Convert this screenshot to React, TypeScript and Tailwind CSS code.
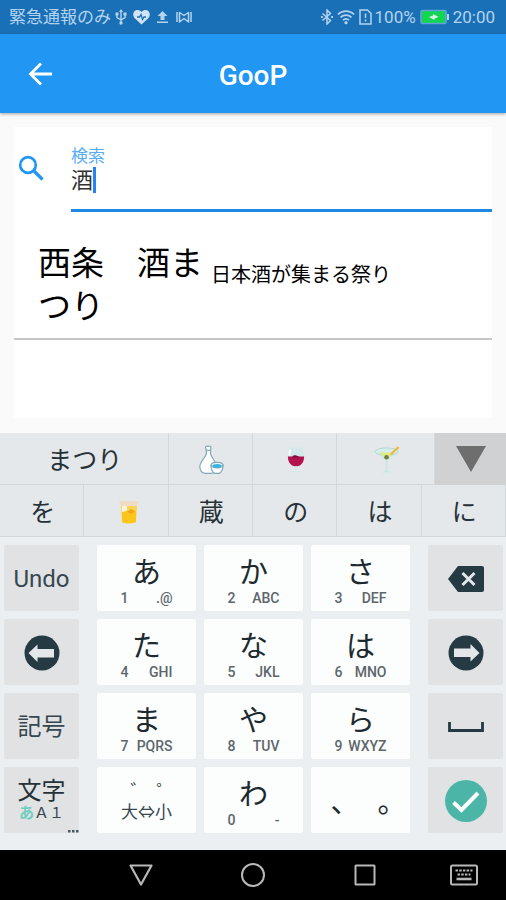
import type { ReactNode } from 'react';

const letterKeys = [
    { kana: 'あ', digit: '1', letters: '.@' },
    { kana: 'か', digit: '2', letters: 'ABC' },
    { kana: 'さ', digit: '3', letters: 'DEF' },
    { kana: 'た', digit: '4', letters: 'GHI' },
    { kana: 'な', digit: '5', letters: 'JKL' },
    { kana: 'は', digit: '6', letters: 'MNO' },
    { kana: 'ま', digit: '7', letters: 'PQRS' },
    { kana: 'や', digit: '8', letters: 'TUV' },
    { kana: 'ら', digit: '9', letters: 'WXYZ' },
];

function StatusBar() {
    return (
        <div className="flex h-[34px] items-center justify-between bg-[#1a70b7] pl-[9px] pr-[11px] text-[17px] leading-none text-[#b4d3ee]">
            <div className="flex items-center">
                <span>緊急通報のみ</span>
                {/* USB */}
                <svg className="ml-1 h-4 w-3" viewBox="0 0 12 16" fill="none" stroke="currentColor" strokeWidth="1.4">
                    <path d="M6 2v12M2 5v3.5l4 2.5 4-2.5V5" />
                    <path d="M6 0l2 3H4z" fill="currentColor" stroke="none" />
                    <circle cx="6" cy="14" r="1.7" fill="currentColor" stroke="none" />
                    <path d="M.5 3.5h3v3h-3zM8.5 3.5h3v3h-3z" fill="currentColor" stroke="none" />
                </svg>
                {/* Health */}
                <svg className="ml-1.5 h-4 w-[17px]" viewBox="0 0 17 16" fill="none">
                    <path d="M8.500 15.500L1.500 9C-2.500 4 3.500-2 8.500 3 13.500-2 19.500 4 15.500 9z" fill="#cfe3f5" />
                    <path d="M4 8h2.500L8 5.500l1.500 5L11 8h2" stroke="#1a70b7" strokeWidth="1.300" />
                </svg>
                {/* Upload */}
                <svg className="ml-[7px] h-3.5 w-[11px]" viewBox="0 0 11 14" fill="currentColor">
                    <path d="M5.500 1L10.500 6H7.500v4h-4V6H.5zM0 11.500h11V13H0z" />
                </svg>
                {/* Tuner */}
                <svg className="ml-2 h-3.5 w-4" viewBox="0 0 16 14" fill="none" stroke="currentColor" strokeWidth="1.500">
                    <path d="M1 2v10M15 2v10M3.500 12V2.500L8 5.500l4.500-3V12L8 8.500z" strokeLinejoin="round" />
                </svg>
            </div>
            <div className="flex items-center">
                {/* Bluetooth */}
                <svg className="h-4 w-3" viewBox="0 0 12 16" fill="none" stroke="currentColor" strokeWidth="1.500">
                    <path d="M1.500 4.500l8 7L6 15V1l3.500 3.500-8 7" />
                    <path d="M0 7h1.800v2H0zM10.200 7H12v2h-1.800z" fill="currentColor" stroke="none" />
                </svg>
                {/* Wi-Fi */}
                <svg className="ml-1 h-4 w-[18px]" viewBox="0 0 18 16" fill="none" stroke="currentColor" strokeWidth="1.700">
                    <path d="M.8 5.500c4.800-4.600 11.600-4.600 16.400 0M3.500 8.400c3.200-3 7.800-3 11 0M6 11.200c1.800-1.700 4.200-1.700 6 0" />
                    <circle cx="9" cy="13.700" r="1.600" fill="currentColor" stroke="none" />
                </svg>
                {/* SIM */}
                <svg className="ml-1 h-4 w-[13px]" viewBox="0 0 13 16" fill="none" stroke="currentColor" strokeWidth="1.500">
                    <path d="M1 1h7.500L12 4.500V15H1zM6.500 4.500V9M6.500 10.500v2" />
                </svg>
                <span className="ml-[3px]">100%</span>
                <svg className="ml-1 h-4 w-[29px]" viewBox="0 0 29 16">
                    <rect x="1" y="1.500" width="25" height="13" rx="1.500" fill="#12d552" stroke="#5fa3d8" strokeWidth="1.700" />
                    <path d="M27 5h2v6h-2z" fill="#b4d3ee" />
                    <path d="M9 8l4-1.500V5l5.500 3-4 1.500V11z" fill="#d9fbe4" />
                </svg>
                <span className="ml-1">20:00</span>
            </div>
        </div>
    );
}

function AppBar() {
    return (
        <header className="relative grid h-[79px] grid-cols-[80px_1fr_80px] items-center bg-[#2196f3] text-white shadow-[0_1px_3px_rgba(0,0,0,0.35)]">
            <button type="button" aria-label="Back" className="flex h-full items-center justify-center">
                <svg className="h-6 w-6" viewBox="0 0 24 24" fill="none" stroke="currentColor" strokeWidth="2.800">
                    <path d="M24 12H2.500M13 1.500L2.500 12 13 22.500" />
                </svg>
            </button>
            <h1 className="pt-1 text-center text-[28px] leading-9 font-medium">GooP</h1>
        </header>
    );
}

function SearchPanel() {
    return (
        <main className="mx-3.5 mt-3.5 h-[291px] bg-white">
            <div className="flex pt-5">
                <div className="w-[57px] pt-2 pl-1">
                    <svg className="h-[26px] w-[26px]" viewBox="0 0 26 26" fill="none" stroke="#2196f3" strokeWidth="2.700">
                        <circle cx="10" cy="10" r="7.800" />
                        <path d="M15.500 15.500l9 9" strokeWidth="3.200" />
                    </svg>
                </div>
                <div className="relative flex flex-1 flex-col border-b-[3px] border-[#1e88e5] pb-[18px]">
                    <label htmlFor="search" className="text-[17px] leading-[18px] text-[#58aef5]">検索</label>
                    <input
                        id="search"
                        type="text"
                        defaultValue="酒"
                        className="h-[26px] w-full bg-transparent text-[22px] leading-6 text-[#333] outline-none"
                    />
                    <span className="absolute top-5 left-[22px] h-[26px] w-[3px] bg-[#2583f5]" />
                </div>
            </div>
            <div className="flex border-b-2 border-[#c6c6c6] pt-[30px] pb-2.5 pl-6 text-black">
                <p className="w-[173px] text-[33px] leading-[43px]">西条　酒まつり</p>
                <p className="pt-[19px] text-[20px] leading-7">日本酒が集まる祭り</p>
            </div>
        </main>
    );
}

function Candidate({ label, children }: { label?: string; children: ReactNode }) {
    return (
        <button
            type="button"
            aria-label={label}
            className="flex h-[52px] flex-1 items-center justify-center border-r border-b border-[#d3d8da] bg-[#e5e8ea] pt-[3px] pl-0.5 text-[25px] leading-none"
        >
            {children}
        </button>
    );
}

function Candidates() {
    return (
        <div className="text-[#263238]">
            <div className="grid grid-cols-[2fr_1fr_1fr_2fr]">
                <Candidate>まつり</Candidate>
                <Candidate label="徳利">
                    <svg className="h-[30px] w-[26px]" viewBox="0 0 28 32" fill="#fff" stroke="#7fa9b5" strokeWidth="1.300">
                        <path d="M8 2.500c0-2 6-2 6 0l-.5 3v4c1 4 6 8 6 13.500 0 4-2 7-5 7.500H8c-3.500-.5-6-3.500-6-7.500C2 18 8 13.500 9 9.500v-4z" />
                        <path d="M9 5.500h4.500" />
                        <path d="M14 21.500h13c0 5-2.500 8-4 9h-5c-2-1-4-4-4-9z" />
                        <ellipse cx="20.500" cy="21.500" rx="6.300" ry="3" />
                        <ellipse cx="20.500" cy="22.300" rx="5" ry="2" fill="#35b4e4" stroke="none" />
                    </svg>
                </Candidate>
                <Candidate label="ワイン">
                    <svg className="h-[30px] w-[18px]" viewBox="0 0 20 32">
                        <path d="M3 2h14c2 5 3 12 0 17-3 5-11 5-14 0-3-5-2-12 0-17z" fill="#d2e8e9" />
                        <path d="M1 12h18c0 7-4 11-9 11s-9-4-9-11z" fill="#b3124f" />
                        <path d="M6 12c2-2.500 5-1 7 0v1.500H6z" fill="#7c1040" />
                        <path d="M3.500 4.500L2.500 11" stroke="#fff" strokeWidth="2" />
                        <path d="M9 23h2v5h4v2H5v-2h4z" fill="#d6e9e8" />
                    </svg>
                </Candidate>
                <div className="flex">
                    <Candidate label="カクテル">
                        <svg className="h-[30px] w-[26px]" viewBox="0 0 28 32">
                            <path d="M1 7h25L16 16H11z" fill="#cfe8e7" />
                            <ellipse cx="13.500" cy="7" rx="12.500" ry="4" fill="#d5eeeb" stroke="#aed6d7" />
                            <path d="M5 8h17l-5 4h-7z" fill="#e2ea86" />
                            <path d="M18 10l8.500-8" stroke="#f2b62e" strokeWidth="2.200" />
                            <circle cx="13.500" cy="13" r="2.500" fill="#737c32" />
                            <path d="M12.500 16h2v11l4 2.500h-10l4-2.500z" fill="#c9e6e4" />
                        </svg>
                    </Candidate>
                    <button type="button" aria-label="候補を開く" className="flex w-[71px] items-center justify-center bg-[#d0d1d2]">
                        <svg className="h-[26px] w-[30px]" viewBox="0 0 30 26" fill="#6e6e6e">
                            <path d="M0 0h30L15 26z" />
                        </svg>
                    </button>
                </div>
            </div>
            <div className="grid grid-cols-6">
                <Candidate>を</Candidate>
                <Candidate label="ウイスキー">
                    <svg className="ml-1 h-6 w-5" viewBox="0 0 20 24">
                        <path d="M0 1h20l-2 5H2z" fill="#efdcc2" />
                        <path d="M2 6h16l-1 16c-3 2-11 2-14 0z" fill="#f9d44f" />
                        <path d="M3 6h5v6H3z" fill="#fff5d8" />
                        <path d="M3 12l9-2 5 1v11c-4 1.500-10 1.500-14 0z" fill="#fcc51c" />
                        <path d="M8 12l4-3 4 2-3 3z" fill="#f0a51e" />
                    </svg>
                </Candidate>
                <Candidate>蔵</Candidate>
                <Candidate>の</Candidate>
                <Candidate>は</Candidate>
                <Candidate>に</Candidate>
            </div>
        </div>
    );
}

function SideKey({ label, children }: { label?: string; children: ReactNode }) {
    return (
        <button
            type="button"
            aria-label={label}
            className="relative flex h-[66px] flex-col items-center justify-center rounded-xs bg-[#e0e2e4] pt-0.5 text-[24px] leading-none text-[#37474f]"
        >
            {children}
        </button>
    );
}

function LetterKey({ kana, digit, letters }: { kana: string; digit: string; letters: string }) {
    return (
        <button type="button" className="flex h-[66px] flex-col items-center rounded-xs bg-[#fcfdfd] pt-3 text-[#1c2a30]">
            <span className="text-[29px] leading-8">{kana}</span>
            <span className="flex w-[52px] justify-between pt-px text-[14px] leading-4 font-medium text-[#5c666b]">
                <span>{digit}</span>
                <span>{letters}</span>
            </span>
        </button>
    );
}

function ArrowIcon({ right = false }: { right?: boolean }) {
    return (
        <svg className={right ? 'h-9 w-9 rotate-180' : 'h-9 w-9'} viewBox="0 0 36 36">
            <circle cx="18" cy="18" r="17.500" fill="#263a44" />
            <path d="M4.500 18l9-8.500V14H30v8.500H13.500V27z" fill="#e4e7e9" />
        </svg>
    );
}

function Keyboard() {
    return (
        <section aria-label="キーボード" className="mt-[15px] bg-[#eceff1]">
            <Candidates />
            <div className="flex pt-2 pr-[3px] pb-[17px] pl-1">
                <div className="grid w-[75px] gap-2">
                    <SideKey>Undo</SideKey>
                    <SideKey label="左へ">
                        <ArrowIcon />
                    </SideKey>
                    <SideKey>記号</SideKey>
                    <SideKey>
                        <span className="text-[#263238]">文字</span>
                        <span className="text-[15px] leading-5">
                            <span className="font-bold text-[#70cdbd]">あ</span>Ａ１
                        </span>
                        <svg className="absolute right-0 bottom-0 h-[3px] w-[11px]" viewBox="0 0 11 3" fill="#455a64">
                            <path d="M0 0h2.500v2.500H0zM4 0h2.500v2.500H4zM8 0h2.500v2.500H8z" />
                        </svg>
                    </SideKey>
                </div>
                <div className="mx-[18px] grid flex-1 grid-cols-3 gap-2">
                    {letterKeys.map((key) => (
                        <LetterKey key={key.digit} {...key} />
                    ))}
                    <button type="button" className="flex h-[66px] flex-col items-center rounded-xs bg-[#fcfdfd] pt-[15px] text-[#37474f]">
                        <span className="flex gap-2 pl-3 text-[18px] leading-5">
                            <span>゛</span>
                            <span>゜</span>
                        </span>
                        <span className="text-[17px] leading-5">大⇔小</span>
                    </button>
                    <LetterKey kana="わ" digit="0" letters="-" />
                    <button type="button" className="flex h-[66px] justify-center gap-[18px] rounded-xs bg-[#fcfdfd] pt-5 pl-4 text-[29px] leading-8 text-[#1c2a30]">
                        <span>、</span>
                        <span>。</span>
                    </button>
                </div>
                <div className="grid w-[75px] gap-2">
                    <SideKey label="削除">
                        <svg className="h-7 w-9" viewBox="0 0 36 28">
                            <path d="M10 1h24q2 0 2 2v22q0 2-2 2H10L0 14z" fill="#263a44" />
                            <path d="M14.500 8l12 12M26.500 8l-12 12" stroke="#e4e7e9" strokeWidth="3" />
                        </svg>
                    </SideKey>
                    <SideKey label="右へ">
                        <ArrowIcon right />
                    </SideKey>
                    <SideKey label="空白">
                        <svg className="h-2.5 w-9" viewBox="0 0 36 10" fill="none" stroke="#263a44" strokeWidth="2.800">
                            <path d="M1.500 0v8.500h33V0" />
                        </svg>
                    </SideKey>
                    <SideKey label="確定">
                        <svg className="h-[42px] w-[42px]" viewBox="0 0 42 42">
                            <circle cx="21" cy="21" r="21" fill="#4bb6a8" />
                            <path d="M8.500 22.500l8 7.500L33 13" fill="none" stroke="#fff" strokeWidth="4" />
                        </svg>
                    </SideKey>
                </div>
            </div>
        </section>
    );
}

function NavigationBar() {
    return (
        <nav className="grid h-[50px] grid-cols-[85fr_112fr_112fr_112fr_85fr] bg-black text-[#b8b8b8]">
            <button type="button" aria-label="Back" className="col-start-2 flex items-center justify-center">
                <svg className="h-[22px] w-6" viewBox="0 0 24 22" fill="none" stroke="currentColor" strokeWidth="2.200" strokeLinejoin="round">
                    <path d="M1.500 1.500h21L12 20.500z" />
                </svg>
            </button>
            <button type="button" aria-label="Home" className="flex items-center justify-center">
                <svg className="h-6 w-6" viewBox="0 0 24 24" fill="none" stroke="currentColor" strokeWidth="2">
                    <circle cx="12" cy="12" r="11" />
                </svg>
            </button>
            <button type="button" aria-label="Recent apps" className="flex items-center justify-center">
                <svg className="h-[22px] w-[22px]" viewBox="0 0 22 22" fill="none" stroke="currentColor" strokeWidth="2">
                    <rect x="1.500" y="1.500" width="19" height="19" rx="0.500" />
                </svg>
            </button>
            <button type="button" aria-label="Keyboard" className="flex items-center justify-center">
                <svg className="h-[22px] w-7" viewBox="0 0 28 22" fill="none" stroke="currentColor" strokeWidth="2">
                    <rect x="1" y="1.500" width="26" height="19" rx="1.500" />
                    <path d="M5.500 6.500h17M7.500 10.500h13" strokeDasharray="2.500 1.200" />
                    <path d="M6.500 15h15" strokeWidth="2.500" />
                </svg>
            </button>
        </nav>
    );
}

export default function App() {
    return (
        <div className="min-h-screen bg-[#fafafa] font-[Roboto,'Noto_Sans_CJK_JP',sans-serif]">
            <StatusBar />
            <AppBar />
            <SearchPanel />
            <Keyboard />
            <NavigationBar />
        </div>
    );
}
